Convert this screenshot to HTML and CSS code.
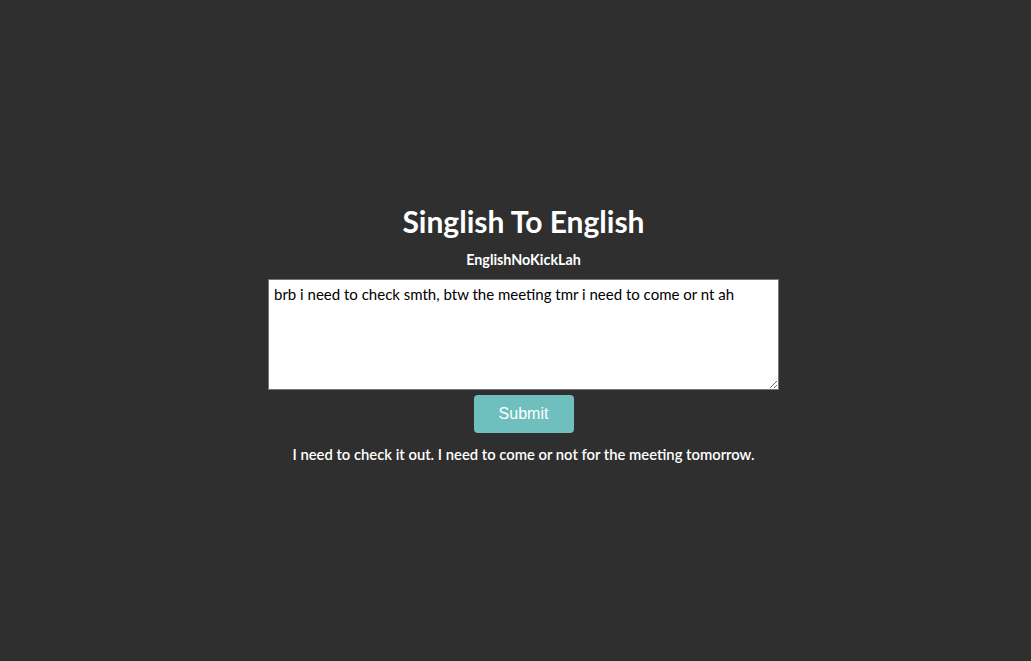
FILE: index.html
```html
<!DOCTYPE html>
<html>
<head>
<meta charset="utf-8">
<link rel="stylesheet" href="styles.css">
</head>
<body>
<main class="page">
  <h1 class="title">Singlish To English</h1>
  <p class="subtitle">EnglishNoKickLah</p>
  <textarea class="input" spellcheck="false">brb i need to check smth, btw the meeting tmr i need to come or nt ah</textarea>
  <button class="submit">Submit</button>
  <p class="output">I need to check it out. I need to come or not for the meeting tomorrow.</p>
</main>
</body>
</html>
```
FILE: styles.css
```css
html, body {
  margin: 0;
  padding: 0;
  background: #2f2f2f;
}
body {
  font-family: Lato, "Open Sans", sans-serif;
  color: #ffffff;
}
.page {
  min-height: 661px;
  display: flex;
  flex-direction: column;
  align-items: center;
  justify-content: center;
  padding: 4px 0 0 16px;
  box-sizing: border-box;
}
.title {
  margin: 0;
  font-size: 30px;
  font-weight: 700;
  line-height: 36px;
}
.subtitle {
  margin: 12px 0 0;
  font-size: 14.3px;
  font-weight: 700;
  line-height: 18px;
}
.input {
  margin-top: 10px;
  width: 511px;
  height: 111px;
  box-sizing: border-box;
  border: 1px solid #767676;
  padding: 5px;
  font-family: Lato, sans-serif;
  font-size: 15px;
  color: #000;
  resize: both;
}
.submit {
  margin-top: 5px;
  width: 100px;
  height: 38px;
  border: none;
  border-radius: 4px;
  background: #6fbfbf;
  color: #fff;
  font-family: "Liberation Sans", Arial, sans-serif;
  font-size: 16px;
}
.output {
  margin: 12px 0 0;
  font-size: 14.8px;
  font-weight: 600;
  line-height: 18px;
}
```
